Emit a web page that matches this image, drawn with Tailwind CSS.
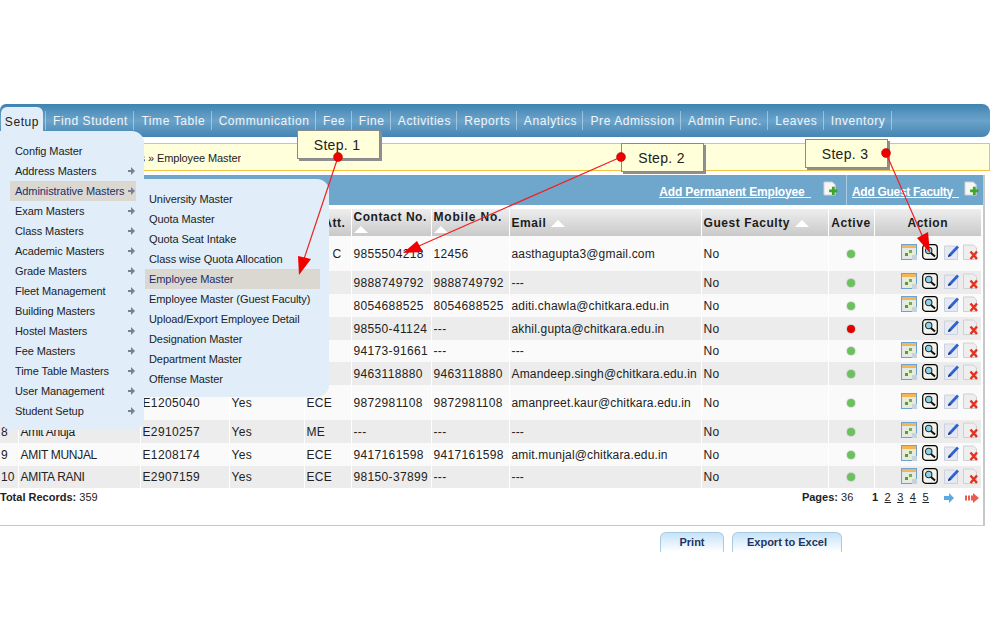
<!DOCTYPE html>
<html lang="en">
<head>
    <meta charset="UTF-8">
    <meta name="viewport" content="width=device-width, initial-scale=1.0">
    <title>Employee Master</title>
    <script src="https://cdn.jsdelivr.net/npm/@tailwindcss/browser@4"></script>
</head>
<body class="bg-white">
<svg width="0" height="0" class="absolute">
    <symbol id="i-chart" viewBox="0 0 16 16">
        <rect x="0.5" y="0.5" width="15" height="15" fill="#dfe8ee" stroke="#6fa3cf"/>
        <rect x="1" y="1" width="14" height="3" fill="#f4b555"/>
        <rect x="2" y="5" width="12" height="9" fill="#e6ecd8"/>
        <rect x="4" y="9" width="3" height="3" fill="#5d9a3a"/>
        <rect x="8" y="6" width="3" height="3" fill="#6fae4a"/>
        <rect x="11" y="11" width="5" height="5" fill="#c6d3de"/>
    </symbol>
    <symbol id="i-view" viewBox="0 0 16 16">
        <rect x="0.7" y="0.7" width="14.6" height="14.6" rx="3" fill="#f3f3ee" stroke="#000" stroke-width="1.2"/>
        <circle cx="6.7" cy="6.5" r="3.2" fill="#8fd3ea" stroke="#2b2b2b" stroke-width="1.1"/>
        <path d="M9 9l4 3.6" stroke="#111" stroke-width="2"/>
    </symbol>
    <symbol id="i-edit" viewBox="0 0 16 16">
        <path d="M0.5 2h10l3 3v10.5H0.5z" fill="#e6e9f2" stroke="#ccd1de"/>
        <path d="M4 13l1-3 8-8.5 2 2-8 8.5z" fill="#2f62cf"/>
        <path d="M4 13l1-3 2 2z" fill="#1c2c60"/>
    </symbol>
    <symbol id="i-del" viewBox="0 0 16 16">
        <path d="M0.5 1h10l3 3v11.5H0.5z" fill="#eeeeee" stroke="#d0d0d0"/>
        <path d="M7.5 7.5l6.5 7.5M14 7.5l-6.5 7.5" stroke="#e6301c" stroke-width="2.4"/>
    </symbol>
    <symbol id="i-add" viewBox="0 0 16 16">
        <path d="M1 1h9l3 3v11H1z" fill="#f6f6f6" stroke="#c8ccd2"/>
        <path d="M11 6v9M6.5 10.5h9" stroke="#3fa52a" stroke-width="3"/>
    </symbol>
</svg>

<div class="relative w-[997px] h-[622px] overflow-hidden pt-[104px] font-['Liberation_Sans',Arial,sans-serif] text-[#222]">

    <!-- top nav -->
    <nav class="flex items-end w-[990px] h-[33px] rounded-tl-md rounded-r-lg pl-px text-[12px] tracking-[0.58px] text-white/90 bg-gradient-to-b from-[#3f83b1] via-[#6ba3ca] to-[#4585b3]">
        <div class="w-[42px] h-[30px] mr-[2px] pt-[6px] text-center rounded-t-md bg-[#e1eef9] text-[#222]">Setup</div>
        <div class="flex items-center h-[33px] leading-[21px]">
            <a class="pl-[7px] pr-[5.4px] h-[19px] border-x border-white/40">Find Student</a>
            <a class="pl-[7px] pr-[5.4px] h-[19px] border-r border-white/40">Time Table</a>
            <a class="pl-[7px] pr-[5.4px] h-[19px] border-r border-white/40">Communication</a>
            <a class="pl-[7px] pr-[5.4px] h-[19px] border-r border-white/40">Fee</a>
            <a class="pl-[7px] pr-[5.4px] h-[19px] border-r border-white/40">Fine</a>
            <a class="pl-[7px] pr-[5.4px] h-[19px] border-r border-white/40">Activities</a>
            <a class="pl-[7px] pr-[5.4px] h-[19px] border-r border-white/40">Reports</a>
            <a class="pl-[7px] pr-[5.4px] h-[19px] border-r border-white/40">Analytics</a>
            <a class="pl-[7px] pr-[5.4px] h-[19px] border-r border-white/40">Pre Admission</a>
            <a class="pl-[7px] pr-[5.4px] h-[19px] border-r border-white/40">Admin Func.</a>
            <a class="pl-[7px] pr-[5.4px] h-[19px] border-r border-white/40">Leaves</a>
            <a class="pl-[7px] pr-[5.4px] h-[19px] border-r border-white/40">Inventory</a>
        </div>
    </nav>

    <!-- breadcrumb -->
    <div class="mt-[6px] w-[990px] h-[28px] border-y border-r border-[#f5c242] bg-[#ffffdc] text-[11px] tracking-[-0.1px] leading-[28px]">
        <div class="w-[241px] text-right whitespace-nowrap overflow-hidden">Masters » Employee Master</div>
    </div>

    <!-- panel -->
    <section class="mt-[4px] w-[985px] h-[351px] border-r-2 border-b border-[#c8c8c8]">
        <div class="flex items-center justify-end h-[30px] bg-[#6fa7cc] text-white text-[12px] font-bold whitespace-nowrap">
            <a class="underline pr-[12px] mt-[3px] tracking-[-0.15px]">Add Permanent Employee&nbsp;&nbsp;</a>
            <svg class="w-[15px] h-[15px] mr-[8px] -mt-[4px]"><use href="#i-add"/></svg>
            <div class="flex items-center h-full pl-[5px] border-l border-[#a9cbe2] w-[137px]">
                <a class="underline mt-[3px] tracking-[-0.3px]">Add Guest Faculty&nbsp;&nbsp;</a>
                <svg class="w-[15px] h-[15px] ml-[5px] -mt-[4px] shrink-0"><use href="#i-add"/></svg>
            </div>
        </div>

        <table class="mt-[4px] w-[981px] table-fixed border-collapse text-[12px] tracking-[0.55px]">
            <colgroup>
                <col class="w-[18px]"><col class="w-[122px]"><col class="w-[89px]"><col class="w-[75px]"><col class="w-[47px]">
                <col class="w-[80px]"><col class="w-[78px]"><col class="w-[192px]"><col class="w-[127px]"><col class="w-[46px]"><col class="w-[107px]">
            </colgroup>
            <thead>
                <tr class="h-[27px] bg-gradient-to-b from-[#eeeeee] to-[#c9c9c9] font-bold text-[#1c1c1c]">
                    <th class="border-r border-white"></th>
                    <th class="border-r border-white"></th>
                    <th class="border-r border-white"></th>
                    <th class="border-r border-white"></th>
                    <th class="border-r border-white pr-[5px] text-right font-bold">Att.</th>
                    <th class="border-r border-white pl-[2px] text-left align-top leading-[15px] pt-px">Contact No.<svg class="block w-[14px] h-[8px]"><path d="M0 8L7 1l7 7z" fill="#fff"/></svg></th>
                    <th class="border-r border-white pl-[2px] text-left align-top leading-[15px] pt-px tracking-[0.8px]">Mobile No.<svg class="block w-[14px] h-[8px]"><path d="M0 8L7 1l7 7z" fill="#fff"/></svg></th>
                    <th class="border-r border-white pl-[2px] text-left">Email<svg class="inline w-[14px] h-[8px] ml-[5px] align-baseline"><path d="M0 8L7 1l7 7z" fill="#fff"/></svg></th>
                    <th class="border-r border-white pl-[2px] text-left">Guest Faculty<svg class="inline w-[14px] h-[8px] ml-[5px] align-baseline"><path d="M0 8L7 1l7 7z" fill="#fff"/></svg></th>
                    <th class="border-r border-white text-center">Active</th>
                    <th class="text-center">Action</th>
                </tr>
            </thead>
            <tbody id="rows"></tbody>
        </table>

        <div class="flex items-center h-[19px] text-[11px]">
            <div><b>Total Records:</b> 359</div>
            <div class="ml-auto w-[52px]"><b>Pages:</b> 36</div>
            <div class="flex gap-[6px] ml-[18px] tracking-[0.5px]">
                <b>1</b><a class="underline">2</a><a class="underline">3</a><a class="underline">4</a><a class="underline">5</a>
            </div>
            <svg class="w-[11px] h-[10px] ml-[15px]" viewBox="0 0 11 10"><path d="M0 3h5V0l5 5-5 5V7H0z" fill="#5aa9e0"/></svg>
            <svg class="w-[14px] h-[10px] ml-[10px] mr-[4px]" viewBox="0 0 14 10"><path d="M0 2.500h2v5H0zM3 2.500h2v5H3zM6 2.500h2V0l6 5-6 5V7.500H6z" fill="#ee5a4e"/></svg>
        </div>
    </section>

    <!-- buttons -->
    <div class="flex gap-[8px] mt-[6px] ml-[660px] text-[11px] font-bold text-[#1b3660]">
        <button class="w-[64px] h-[20px] rounded-t-md border-x border-t border-[#a9cbe2] bg-gradient-to-b from-[#c6e2f9] to-white">Print</button>
        <button class="w-[110px] h-[20px] rounded-t-md border-x border-t border-[#a9cbe2] bg-gradient-to-b from-[#c6e2f9] to-white">Export to Excel</button>
    </div>

    <!-- open menu -->
    <ul class="absolute left-0 top-[131px] w-[144px] h-[299px] pt-[10px] rounded-b-xl rounded-tr-xl bg-[#e1eef9] text-[11px] tracking-[-0.08px] leading-[20px] text-[#222]">
        <li class="pl-[15px]">Config Master</li>
        <li class="flex justify-between pl-[15px] pr-[9px]">Address Masters<svg class="w-[7px] h-[20px]" viewBox="0 0 7 20"><path d="M0 9h3V6l4 4-4 4v-3H0z" fill="#7a7f93"/></svg></li>
        <li class="flex justify-between ml-[10px] pl-[5px] pr-[9px] bg-[#dbd8d2] text-[#1b2f6b]">Administrative Masters<svg class="w-[7px] h-[20px]" viewBox="0 0 7 20"><path d="M0 9h3V6l4 4-4 4v-3H0z" fill="#7a7f93"/></svg></li>
        <li class="flex justify-between pl-[15px] pr-[9px]">Exam Masters<svg class="w-[7px] h-[20px]" viewBox="0 0 7 20"><path d="M0 9h3V6l4 4-4 4v-3H0z" fill="#7a7f93"/></svg></li>
        <li class="flex justify-between pl-[15px] pr-[9px]">Class Masters<svg class="w-[7px] h-[20px]" viewBox="0 0 7 20"><path d="M0 9h3V6l4 4-4 4v-3H0z" fill="#7a7f93"/></svg></li>
        <li class="flex justify-between pl-[15px] pr-[9px]">Academic Masters<svg class="w-[7px] h-[20px]" viewBox="0 0 7 20"><path d="M0 9h3V6l4 4-4 4v-3H0z" fill="#7a7f93"/></svg></li>
        <li class="flex justify-between pl-[15px] pr-[9px]">Grade Masters<svg class="w-[7px] h-[20px]" viewBox="0 0 7 20"><path d="M0 9h3V6l4 4-4 4v-3H0z" fill="#7a7f93"/></svg></li>
        <li class="flex justify-between pl-[15px] pr-[9px]">Fleet Management<svg class="w-[7px] h-[20px]" viewBox="0 0 7 20"><path d="M0 9h3V6l4 4-4 4v-3H0z" fill="#7a7f93"/></svg></li>
        <li class="flex justify-between pl-[15px] pr-[9px]">Building Masters<svg class="w-[7px] h-[20px]" viewBox="0 0 7 20"><path d="M0 9h3V6l4 4-4 4v-3H0z" fill="#7a7f93"/></svg></li>
        <li class="flex justify-between pl-[15px] pr-[9px]">Hostel Masters<svg class="w-[7px] h-[20px]" viewBox="0 0 7 20"><path d="M0 9h3V6l4 4-4 4v-3H0z" fill="#7a7f93"/></svg></li>
        <li class="flex justify-between pl-[15px] pr-[9px]">Fee Masters<svg class="w-[7px] h-[20px]" viewBox="0 0 7 20"><path d="M0 9h3V6l4 4-4 4v-3H0z" fill="#7a7f93"/></svg></li>
        <li class="flex justify-between pl-[15px] pr-[9px]">Time Table Masters<svg class="w-[7px] h-[20px]" viewBox="0 0 7 20"><path d="M0 9h3V6l4 4-4 4v-3H0z" fill="#7a7f93"/></svg></li>
        <li class="flex justify-between pl-[15px] pr-[9px]">User Management<svg class="w-[7px] h-[20px]" viewBox="0 0 7 20"><path d="M0 9h3V6l4 4-4 4v-3H0z" fill="#7a7f93"/></svg></li>
        <li class="flex justify-between pl-[15px] pr-[9px]">Student Setup<svg class="w-[7px] h-[20px]" viewBox="0 0 7 20"><path d="M0 9h3V6l4 4-4 4v-3H0z" fill="#7a7f93"/></svg></li>
    </ul>

    <!-- sub menu -->
    <ul class="absolute left-[136px] top-[179px] w-[193px] h-[218px] pt-[10px] rounded-b-xl rounded-tr-xl bg-[#e1eef9] text-[11px] tracking-[-0.08px] leading-[20px] text-[#222]">
        <li class="pl-[13px]">University Master</li>
        <li class="pl-[13px]">Quota Master</li>
        <li class="pl-[13px]">Quota Seat Intake</li>
        <li class="pl-[13px]">Class wise Quota Allocation</li>
        <li class="ml-[9px] mr-[9px] pl-[4px] bg-[#dbd8d2] text-[#1b2f6b]">Employee Master</li>
        <li class="pl-[13px]">Employee Master (Guest Faculty)</li>
        <li class="pl-[13px]">Upload/Export Employee Detail</li>
        <li class="pl-[13px]">Designation Master</li>
        <li class="pl-[13px]">Department Master</li>
        <li class="pl-[13px]">Offense Master</li>
    </ul>

    <!-- step callouts -->
    <div class="absolute left-[297px] top-[130px] w-[83px] h-[29px] pr-[3px] text-center text-[14px] leading-[28px] tracking-[0.3px] bg-[#ffffd9] border border-[#8a8a8a] shadow-[2px_2px_0_#8f8f8f]">Step. 1</div>
    <div class="absolute left-[621px] top-[143px] w-[83px] h-[29px] pr-[2px] text-center text-[14px] leading-[28px] tracking-[0.3px] bg-[#ffffd9] border border-[#8a8a8a] shadow-[2px_2px_0_#8f8f8f]">Step. 2</div>
    <div class="absolute left-[805px] top-[139px] w-[83px] h-[29px] pr-[3px] text-center text-[14px] leading-[28px] tracking-[0.3px] bg-[#ffffd9] border border-[#8a8a8a] shadow-[2px_2px_0_#8f8f8f]">Step. 3</div>

    <!-- arrows over the page -->
    <svg class="absolute left-0 top-0 w-[997px] h-[622px] pointer-events-none" viewBox="0 0 997 622">
        <g stroke="#f02020" fill="none" stroke-width="1.2">
            <path d="M338 157L303 262"/>
            <path d="M621 157L412 249"/>
            <path d="M886 153L924 240"/>
        </g>
        <g fill="#f00000">
            <path d="M298 256L311 259L299 275z"/>
            <path d="M417 241L423 252L403 253z"/>
            <path d="M917 238L928 232L930 253z"/>
            <circle cx="338" cy="157" r="4.5" stroke="#a00000" stroke-width="0.5"/>
            <circle cx="621" cy="157" r="4.5" stroke="#a00000" stroke-width="0.5"/>
            <circle cx="886" cy="153" r="4.5" stroke="#a00000" stroke-width="0.5"/>
        </g>
    </svg>
</div>

<script>
    const rows = [
        { h: 'h-[35px]', dept: 'C', deptPad: 'pl-[28px]', contact: '9855504218', mobile: '12456', email: 'aasthagupta3@gmail.com' },
        { h: 'h-[23px]', dept: '', contact: '9888749792', mobile: '9888749792', email: '---' },
        { h: 'h-[23px]', dept: '', contact: '8054688525', mobile: '8054688525', email: 'aditi.chawla@chitkara.edu.in' },
        { h: 'h-[23px]', dept: '', contact: '98550-41124', mobile: '---', email: 'akhil.gupta@chitkara.edu.in', off: true },
        { h: 'h-[22px]', dept: '', contact: '94173-91661', mobile: '---', email: '---' },
        { h: 'h-[23px]', dept: '', contact: '9463118880', mobile: '9463118880', email: 'Amandeep.singh@chitkara.edu.in' },
        { h: 'h-[35px]', code: 'E1205040', yes: 'Yes', dept: 'ECE', contact: '9872981108', mobile: '9872981108', email: 'amanpreet.kaur@chitkara.edu.in' },
        { h: 'h-[23px]', no: 8, name: 'Amit Anuja', code: 'E2910257', yes: 'Yes', dept: 'ME', contact: '---', mobile: '---', email: '---' },
        { h: 'h-[23px]', no: 9, name: 'AMIT MUNJAL', code: 'E1208174', yes: 'Yes', dept: 'ECE', contact: '9417161598', mobile: '9417161598', email: 'amit.munjal@chitkara.edu.in' },
        { h: 'h-[22px]', no: 10, name: 'AMITA RANI', code: 'E2907159', yes: 'Yes', dept: 'ECE', contact: '98150-37899', mobile: '---', email: '---' },
    ];
    const td = 'border-r border-white pl-[2px] whitespace-nowrap tracking-[0.35px]';
    const tdName = 'border-r border-white pl-[2px] whitespace-nowrap tracking-[-0.3px]';
    const tdEmail = 'border-r border-white pl-[2px] whitespace-nowrap tracking-[0.17px]';
    document.getElementById('rows').innerHTML = rows.map((r, i) => `
        <tr class="${r.h} ${i % 2 ? 'bg-[#ececec]' : 'bg-[#fafafa]'}">
            <td class="border-r border-white pl-px tracking-normal">${r.no || ''}</td>
            <td class="${tdName}">${r.name || ''}</td>
            <td class="${td}">${r.code || ''}</td>
            <td class="${td}">${r.yes || ''}</td>
            <td class="${td} ${r.deptPad || ''}">${r.dept}</td>
            <td class="${td}">${r.contact}</td>
            <td class="${td}">${r.mobile}</td>
            <td class="${tdEmail}">${r.email}</td>
            <td class="${td}">No</td>
            <td class="border-r border-white"><span class="block ml-[18px] w-[8px] h-[8px] rounded-full ring-1 ring-black/10 ${r.off ? 'bg-[#e00000]' : 'bg-[#6cc060]'}"></span></td>
            <td><div class="flex items-center pl-[26px] -mt-[3px]">
                <svg class="w-[16px] h-[16px] ${r.off ? 'invisible' : ''}"><use href="#i-chart"/></svg>
                <svg class="w-[16px] h-[16px] ml-[5px]"><use href="#i-view"/></svg>
                <svg class="w-[16px] h-[16px] ml-[6px]"><use href="#i-edit"/></svg>
                <svg class="w-[16px] h-[16px] ml-[3px]"><use href="#i-del"/></svg>
            </div></td>
        </tr>`).join('');
</script>
</body>
</html>
